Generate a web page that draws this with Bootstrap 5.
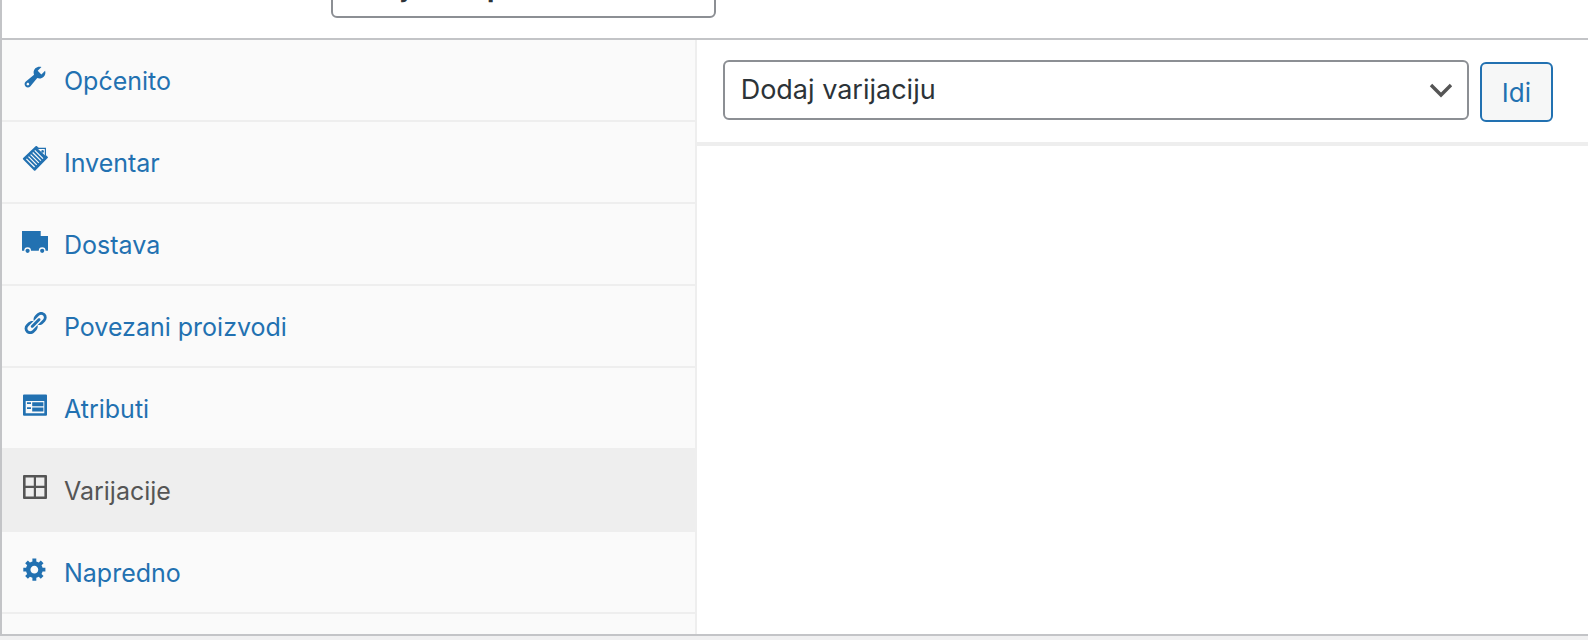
<!DOCTYPE html>
<html lang="hr">
<head>
<meta charset="utf-8">
<meta name="viewport" content="width=device-width, initial-scale=1">
<title>Podaci o proizvodu</title>
<link href="https://cdn.jsdelivr.net/npm/bootstrap@5.3.0/dist/css/bootstrap.min.css" rel="stylesheet">
<style>
  body { background: #f0f0f1; font-family: Inter, "Liberation Sans", sans-serif; color: #2c3338; }
  .product-box { background: #fff; border: solid #c3c4c7; border-width: 0 0 2px 2px; box-shadow: 0 2px 2px rgba(0,0,0,.04); }
  .box-head { height: 40px; padding: 0 20px 20px 329px; border-bottom: 2px solid #c3c4c7; }
  .wp-select {
    height: 60px; padding: 0 60px 0 16px; border: 2px solid #8c8f94; border-radius: 6px;
    font-size: 27px; line-height: 40px; color: #2c3338; background-color: #fff;
    background-image: url("data:image/svg+xml,%3Csvg xmlns='http://www.w3.org/2000/svg' viewBox='0 0 24 24'%3E%3Cpath d='M2 7l10 10L22 7' fill='none' stroke='%23555' stroke-width='3.4'/%3E%3C/svg%3E");
    background-size: 24px 24px; background-position: right 14px center;
  }
  .type-select { width: 385px; font-weight: 700; background-image: none; }
  .side-tabs { width: 43.8%; background: #fafafa; border-right: 2px solid #eee; padding-bottom: 20px; }
  .side-tabs .nav-link {
    padding: 21px 20px 19px; gap: 16px; border-bottom: 2px solid #eee; border-radius: 0;
    font-size: 25px; line-height: 40px; color: #2271b1;
  }
  .side-tabs .nav-link.active { background: #eee; color: #555; }
  .side-tabs svg { width: 26px; height: 26px; margin-bottom: 8px; fill: currentColor; flex: none; }
  .toolbar-row { padding: 20px 35px 20px 26px; gap: 11px; border-bottom: 4px solid #eee; }
  .btn-go {
    height: 60px; margin-top: 2px; padding: 2px 20px 0; border: 2px solid #2271b1; border-radius: 6px;
    background: #f6f7f7; color: #2271b1; font-size: 26px; line-height: 40px;
  }
</style>
</head>
<body>
<main class="product-box">
  <header class="box-head d-flex align-items-end">
    <select class="form-select wp-select type-select flex-shrink-0" aria-label="Vrsta proizvoda">
      <option>Varijabilni proizvod</option>
    </select>
  </header>
  <div class="d-flex">
    <nav class="side-tabs flex-shrink-0" aria-label="Podaci o proizvodu">
      <ul class="nav flex-column">
        <li><a href="#" class="nav-link d-flex align-items-center">
          <svg viewBox="0 0 20 20" aria-hidden="true"><path d="M16.68 9.77c-1.34 1.34-3.3 1.67-4.95.99l-5.41 6.52c-.99.99-2.59.99-3.58 0s-.99-2.59 0-3.57l6.52-5.42c-.68-1.65-.35-3.61.99-4.95 1.28-1.28 3.12-1.62 4.72-1.06l-2.89 2.89 2.82 2.82 2.86-2.87c.53 1.58.18 3.39-1.08 4.65zM3.81 16.21c.4.39 1.04.39 1.43 0 .4-.4.4-1.04 0-1.43-.39-.4-1.03-.4-1.43 0-.39.39-.39 1.03 0 1.43z"/></svg>
          Općenito</a></li>
        <li><a href="#" class="nav-link d-flex align-items-center">
          <svg viewBox="0 0 26 26" aria-hidden="true">
            <path d="M13.6 .3a1 1 0 0 1 1.4 0L25.6 10.7a1 1 0 0 1 0 1.4L13.4 24.4a1 1 0 0 1-1.4 0L1.2 13.5a1 1 0 0 1 0-1.4z"/>
            <path d="M15.5 2.4h7.9v7.4" fill="#fafafa" stroke="currentColor" stroke-width="1.2"/>
            <circle cx="20.6" cy="5.4" r="1.3"/>
            <path d="M4.4 12.8l8.2 8.2M6.5 10.7l8.2 8.2M8.6 8.6l8.2 8.2M10.7 6.5l8.2 8.2M12.8 4.4l8.2 8.2" fill="none" stroke="#fafafa" stroke-width="1.2"/>
          </svg>
          Inventar</a></li>
        <li><a href="#" class="nav-link d-flex align-items-center">
          <svg viewBox="0 0 26 26" aria-hidden="true">
            <path d="M0 3h18.7v5H26v14.7h-2.4a3.4 3.4 0 0 0-6.8 0H9a3.4 3.4 0 0 0-6.8 0H0z"/>
            <circle cx="5.6" cy="22.8" r="2.1"/><circle cx="20.2" cy="22.8" r="2.1"/>
          </svg>
          Dostava</a></li>
        <li><a href="#" class="nav-link d-flex align-items-center">
          <svg viewBox="0 0 20 20" aria-hidden="true"><path d="M17.74 2.76c1.68 1.69 1.68 4.41 0 6.1l-1.53 1.52c-1.12 1.12-2.7 1.47-4.14 1.09l2.62-2.61.76-.77.76-.76c.84-.84.84-2.2 0-3.04-.84-.85-2.2-.85-3.04 0l-.77.76-3.38 3.38c-.37-1.44-.02-3.02 1.1-4.14l1.52-1.53c1.69-1.68 4.42-1.68 6.1 0zM8.59 13.43l5.34-5.34c.42-.42.42-1.1 0-1.52-.44-.43-1.13-.39-1.53 0l-5.33 5.34c-.42.42-.42 1.1 0 1.52.44.43 1.13.39 1.52 0zm-.76 2.29l4.14-4.15c.38 1.44.03 3.02-1.09 4.14l-1.52 1.53c-1.69 1.68-4.41 1.68-6.1 0-1.68-1.68-1.68-4.42 0-6.1l1.53-1.52c1.12-1.12 2.7-1.47 4.14-1.1l-4.14 4.15c-.85.84-.85 2.2 0 3.05.84.84 2.2.84 3.04 0z"/></svg>
          Povezani proizvodi</a></li>
        <li><a href="#" class="nav-link d-flex align-items-center">
          <svg viewBox="0 0 26 26" aria-hidden="true">
            <path fill-rule="evenodd" d="M2 2.4h22a1 1 0 0 1 1 1v19.3a1 1 0 0 1-1 1H2a1 1 0 0 1-1-1V3.400a1 1 0 0 1 1-1zM3.700 9v12.200h18.600V9z"/>
            <path d="M5 10.200h4v1.800H5zM5 15.200h4V17H5zM10.200 10.200h11.200v4H10.200zM10.200 15.600h11.200v4H10.200z"/>
          </svg>
          Atributi</a></li>
        <li><a href="#" class="nav-link active d-flex align-items-center" aria-current="page">
          <svg viewBox="0 0 26 26" aria-hidden="true"><path fill-rule="evenodd" d="M2 1h22a1 1 0 0 1 1 1v22a1 1 0 0 1-1 1H2a1 1 0 0 1-1-1V2a1 1 0 0 1 1-1zM3.600 3.600v8.200h8.200V3.600zM14 3.600v8.200h8.400V3.600zM3.600 14v8.400h8.200V14zM14 14v8.400h8.400V14z"/></svg>
          Varijacije</a></li>
        <li><a href="#" class="nav-link d-flex align-items-center">
          <svg viewBox="0 0 20 20" aria-hidden="true"><path d="M18 12h-2.18c-.17.7-.44 1.35-.81 1.93l1.54 1.54-2.1 2.1-1.54-1.54c-.58.36-1.23.63-1.91.79V19H8v-2.18c-.68-.16-1.33-.43-1.91-.79l-1.54 1.54-2.12-2.12 1.54-1.54c-.36-.58-.63-1.23-.79-1.91H1V9.03h2.17c.16-.7.44-1.35.8-1.94L2.43 5.55l2.1-2.1 1.54 1.54c.58-.37 1.24-.64 1.93-.81V2h3v2.18c.68.16 1.33.43 1.91.79l1.54-1.54 2.12 2.12-1.54 1.54c.36.59.64 1.24.8 1.94H18V12zm-8.5 1.5c1.66 0 3-1.34 3-3s-1.34-3-3-3-3 1.34-3 3 1.34 3 3 3z"/></svg>
          Napredno</a></li>
      </ul>
    </nav>
    <section class="flex-grow-1" aria-label="Varijacije">
      <div class="toolbar-row d-flex">
        <select class="form-select wp-select" aria-label="Radnja varijacije">
          <option>Dodaj varijaciju</option>
        </select>
        <button type="button" class="btn btn-go flex-shrink-0">Idi</button>
      </div>
    </section>
  </div>
</main>
<script src="https://cdn.jsdelivr.net/npm/bootstrap@5.3.0/dist/js/bootstrap.bundle.min.js"></script>
</body>
</html>
